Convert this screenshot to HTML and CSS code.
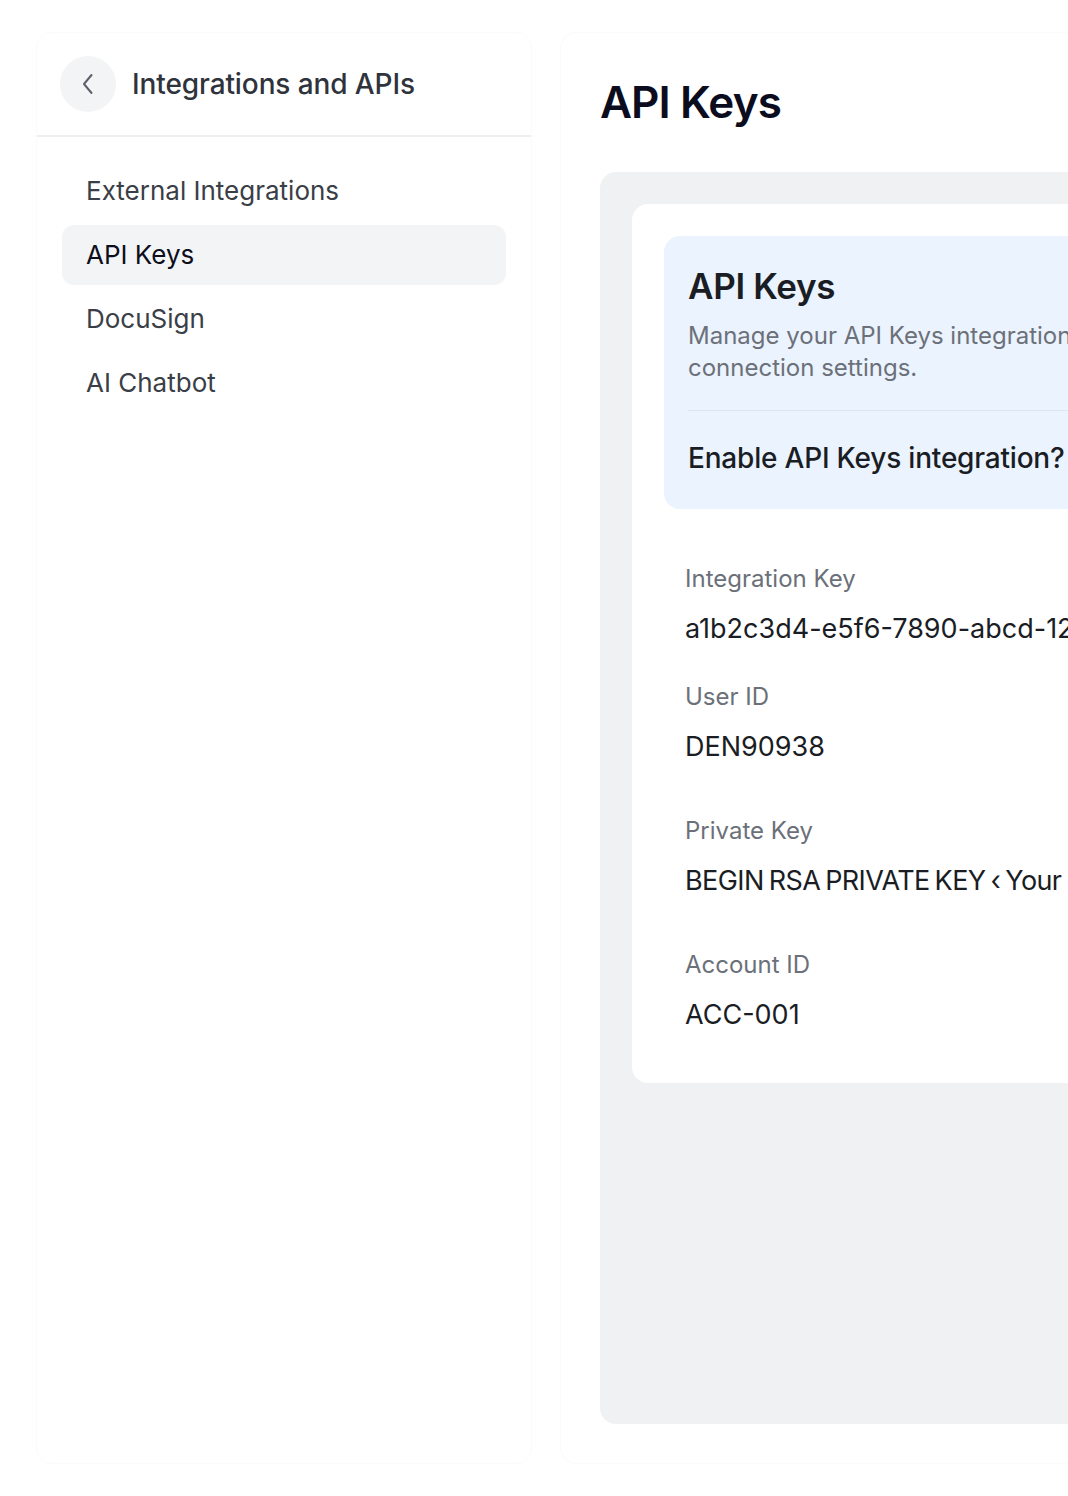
FILE: index.html
```html
<!DOCTYPE html>
<html lang="en">
<head>
<meta charset="utf-8">
<title>API Keys</title>
<link rel="stylesheet" href="styles.css">
</head>
<body>
<div class="layout">
  <aside class="sidebar">
    <div class="side-head">
      <button class="back" type="button" aria-label="Back">
        <svg width="14" height="22" viewBox="0 0 14 22" fill="none"><path d="M10.5 2 L3 11 L10.5 20" stroke="#5b606b" stroke-width="2" stroke-linecap="round" stroke-linejoin="round"/></svg>
      </button>
      <h2 class="side-title">Integrations and APIs</h2>
    </div>
    <nav class="nav">
      <a class="nav-item">External Integrations</a>
      <a class="nav-item active">API Keys</a>
      <a class="nav-item">DocuSign</a>
      <a class="nav-item">AI Chatbot</a>
    </nav>
  </aside>
  <main class="main">
    <h1 class="page-title">API Keys</h1>
    <section class="well">
      <div class="card">
        <div class="intro">
          <h2 class="intro-title">API Keys</h2>
          <p class="intro-desc">Manage your API Keys integration credentials and<br>connection settings.</p>
          <div class="intro-row">
            <span class="intro-q">Enable API Keys integration?</span>
          </div>
        </div>
        <div class="fields">
          <div class="field">
            <div class="label">Integration Key</div>
            <div class="value">a1b2c3d4-e5f6-7890-abcd-1234567890ef</div>
          </div>
          <div class="field">
            <div class="label">User ID</div>
            <div class="value">DEN90938</div>
          </div>
          <div class="field spaced">
            <div class="label">Private Key</div>
            <div class="value tight">BEGIN RSA PRIVATE KEY &lsaquo; Your Private Key &rsaquo;</div>
          </div>
          <div class="field spaced">
            <div class="label">Account ID</div>
            <div class="value">ACC-001</div>
          </div>
        </div>
      </div>
    </section>
  </main>
</div>
</body>
</html>
```
FILE: styles.css
```css
* { box-sizing: border-box; }
html, body { margin: 0; padding: 0; overflow: hidden; background: #ffffff; }
body {
  font-family: Inter, "Noto Sans", "Liberation Sans", sans-serif;
  color: #1a1d24;
}
.layout {
  display: flex;
  gap: 28px;
  padding: 32px 0 32px 36px;
  height: 1496px;
  width: 1600px;
}
.sidebar {
  width: 496px;
  flex: none;
  border: 1px solid #fbfbfc;
  border-radius: 16px;
  background: #fff;
}
.side-head {
  display: flex;
  align-items: center;
  gap: 16px;
  padding: 23px 23px;
  border-bottom: 2px solid #eceef1;
}
.back {
  width: 56px;
  height: 56px;
  border-radius: 50%;
  border: none;
  background: #f3f4f6;
  display: flex;
  align-items: center;
  justify-content: center;
  padding: 0;
}
.side-title {
  margin: 0;
  font-size: 28px;
  font-weight: 500;
  color: #2f333c;
  letter-spacing: -0.1px;
}
.nav {
  display: flex;
  flex-direction: column;
  gap: 4px;
  padding: 24px 25px;
}
.nav-item {
  display: block;
  height: 60px;
  line-height: 60px;
  padding: 0 24px;
  border-radius: 12px;
  font-size: 26px;
  color: #3a3e47;
  letter-spacing: 0;
}
.nav-item.active {
  background: #f3f4f6;
  color: #0d0f1c;
}
.main {
  width: 900px;
  flex: none;
  border: 1px solid #fbfbfc;
  border-radius: 16px;
  padding: 39px 0 39px 39px;
  display: flex;
  flex-direction: column;
}
.page-title {
  margin: 0;
  height: 60px;
  line-height: 60px;
  font-size: 44px;
  font-weight: 600;
  color: #0b0d1f;
  letter-spacing: -0.9px;
}
.well {
  margin-top: 40px;
  flex: 1;
  background: #f0f1f3;
  border-radius: 16px 0 0 16px;
  padding: 32px;
}
.card {
  background: #fff;
  border-radius: 16px;
  padding: 32px 32px 50px;
}
.intro {
  background: #ebf3fe;
  border-radius: 16px;
  padding: 24px 24px 0;
}
.intro-title {
  margin: 0;
  font-size: 35px;
  line-height: 52px;
  font-weight: 600;
  color: #1a1d24;
  letter-spacing: -0.3px;
}
.intro-desc {
  margin: 8px 0 0;
  font-size: 24px;
  line-height: 32px;
  color: #6b7079;
  letter-spacing: 0;
  white-space: nowrap;
}
.intro-row {
  margin-top: 26px;
  border-top: 1px solid #dfe5ee;
  padding: 22px 0 26px;
  height: 99px;
  display: flex;
  align-items: center;
}
.intro-q {
  font-size: 28px;
  font-weight: 500;
  color: #1a1d24;
  letter-spacing: -0.2px;
}
.fields {
  padding: 0 21px;
  margin-top: 54px;
  display: flex;
  flex-direction: column;
}
.field + .field { margin-top: 34px; }
.field.spaced { margin-top: 50px; }
.label {
  font-size: 24px;
  line-height: 32px;
  color: #6b7079;
  letter-spacing: 0;
}
.value {
  margin-top: 16px;
  font-size: 27px;
  line-height: 36px;
  color: #1a1d24;
  white-space: nowrap;
  letter-spacing: 0;
}
.value.tight {
  letter-spacing: -0.6px;
  word-spacing: -2px;
}
```
